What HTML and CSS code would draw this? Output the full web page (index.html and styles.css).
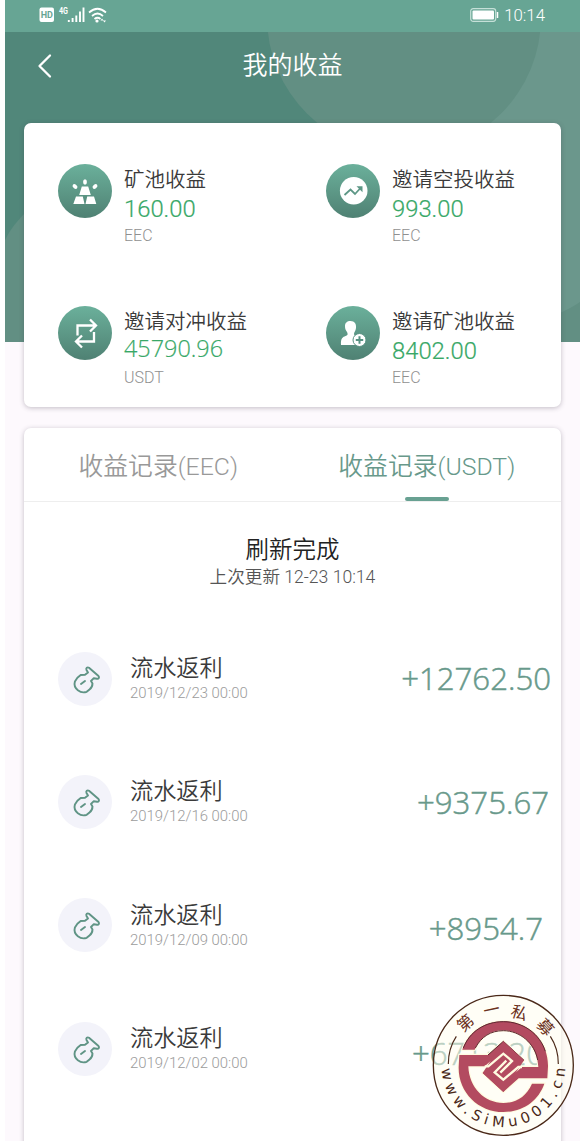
FILE: index.html
```html
<!DOCTYPE html>
<html lang="zh-CN">
<head>
  <meta charset="UTF-8">
  <meta name="viewport" content="width=device-width, initial-scale=1.0">
  <title>我的收益</title>
  <link rel="stylesheet" href="styles.css">
</head>
<body>
  <div class="app">
    <!-- Header background -->
    <svg class="header-bg" viewBox="5 0 575 342" preserveAspectRatio="none">
      <rect x="5" width="575" height="342" fill="#51877a"/>
      <path d="M440 0H580V342H440Z" fill="#6b978c"/>
      <circle cx="404" cy="17" r="137" fill="#628f83"/>
      <path d="M5 240Q12 225 30 208V342H5Z" fill="#628f83"/>
      <path d="M555 315Q570 309 580 302V342H555Z" fill="#628f83"/>
    </svg>

    <!-- Status bar -->
    <div class="status-bar">
      <svg class="status-icons" width="70" height="20" viewBox="0 0 70 20">
        <rect x="1.500" y="2.500" width="14.500" height="14.500" rx="2" fill="#fff"/>
        <text x="8.800" y="13" class="hd">HD</text>
        <text x="21" y="9" class="net" textLength="9" lengthAdjust="spacingAndGlyphs">4G</text>
        <path d="M30.800 17v-2M34.600 17v-4M38.300 17v-6.500M42 17V6.500M45.500 17V2.500" stroke="#fff" stroke-width="1.900"/>
        <g fill="none" stroke="#fff" stroke-width="1.700">
          <path d="M51 7.500Q59.500 0 68 7.500M54 11Q59.500 6 65 11M56.500 14Q59.500 11.500 62.500 14"/>
        </g>
        <circle cx="59" cy="16" r="1.600" fill="#fff"/>
        <path d="M62.500 15.500l1.500-2 1.500 2zM65 15.500l1.500 2 1.500-2z" fill="#fff"/>
      </svg>
      <div class="status-right">
        <svg width="29" height="14" viewBox="0 0 29 14">
          <rect x=".7" y=".7" width="25" height="12.600" rx="2.500" fill="none" stroke="#c5e0d8" stroke-width="1.200"/>
          <rect x="2.500" y="2.500" width="21.500" height="9" rx="1" fill="#fff"/>
          <path d="M27.500 4v6" stroke="#fff" stroke-width="1.500"/>
        </svg>
        <span>10:14</span>
      </div>
    </div>

    <!-- Title bar -->
    <div class="nav">
      <svg class="back" width="16" height="26" viewBox="0 0 16 26">
        <path d="M13 2.500L2.500 13L13 23.500" fill="none" stroke="#fff" stroke-width="2.300" stroke-linecap="round" stroke-linejoin="round"/>
      </svg>
      <h1>我的收益</h1>
    </div>

    <!-- Income summary -->
    <div class="card summary">
      <div class="income">
        <div class="income-icon">
          <svg viewBox="0 0 54 54" fill="#fff">
            <path d="M23.800 22.500h6.400l2.600 8.500H21.200zM18 32.500h6.800l1.700 7.500H15.300zM29.200 32.500H36l2.300 7.500H27.500z"/>
            <ellipse cx="27" cy="18" rx="1.900" ry="2.700"/>
            <ellipse cx="17" cy="22.500" rx="1.900" ry="2.800" transform="rotate(-48 17 22.500)"/>
            <ellipse cx="37" cy="22.500" rx="1.900" ry="2.800" transform="rotate(48 37 22.500)"/>
          </svg>
        </div>
        <div>
          <p class="label">矿池收益</p>
          <p class="value">160.00</p>
          <p class="unit">EEC</p>
        </div>
      </div>
      <div class="income">
        <div class="income-icon">
          <svg viewBox="0 0 54 54">
            <circle cx="27.700" cy="26.700" r="13.800" fill="#fff"/>
            <path d="M18.500 31l6-5.500 4.500 4.500 6-6.500" fill="none" stroke="#5d9786" stroke-width="1.800"/>
            <path d="M30.500 22.200h6v6z" fill="#5d9786"/>
          </svg>
        </div>
        <div>
          <p class="label">邀请空投收益</p>
          <p class="value">993.00</p>
          <p class="unit">EEC</p>
        </div>
      </div>
      <div class="income">
        <div class="income-icon">
          <svg viewBox="0 0 54 54" fill="none" stroke="#fff" stroke-width="2.300">
            <path d="M19.500 29.500V19.500H37M32 13.500l6 6-6 6M36 26V35.500H18.500M24 29.500l-6 6 6 6"/>
          </svg>
        </div>
        <div>
          <p class="label">邀请对冲收益</p>
          <p class="value value-wide">45790.96</p>
          <p class="unit">USDT</p>
        </div>
      </div>
      <div class="income">
        <div class="income-icon">
          <svg viewBox="0 0 54 54">
            <path d="M24.500 15c4.200 0 6 3 5.500 7-.3 3-2 4-2 6 0 2.500 4.500 3 6 5v6H15c-.5-7 2-8 4.500-9 2.500-1 2.500-1.500 1.500-4-1.500-2-2-3.500-2-6 0-3 2-5 5.500-5z" fill="#fff"/>
            <circle cx="33.500" cy="34" r="6.500" fill="#fff" stroke="#579282" stroke-width="1"/>
            <path d="M33.500 30.300v7.400M29.800 34h7.400" stroke="#579282" stroke-width="2"/>
          </svg>
        </div>
        <div>
          <p class="label">邀请矿池收益</p>
          <p class="value">8402.00</p>
          <p class="unit">EEC</p>
        </div>
      </div>
    </div>

    <!-- Income records -->
    <div class="card records">
      <div class="tabs">
        <div class="tab">收益记录(EEC)</div>
        <div class="tab active">收益记录(USDT)</div>
      </div>
      <div class="refresh">
        <p class="refresh-title">刷新完成</p>
        <p class="refresh-time">上次更新 12-23 10:14</p>
      </div>
      <div class="list" id="record-list"></div>
    </div>

    <!-- Round seal over the last record -->
    <svg class="seal" viewBox="36 42 428 428">
      <defs>
        <path id="seal-bottom" d="M64 255A186 186 0 0 0 436 255"/>
      </defs>
      <circle cx="250" cy="256" r="210" fill="#fffdee" fill-opacity=".55" stroke="#4a2818" stroke-width="4"/>
      <path d="M85 252Q85 205 109 169M415 252Q415 205 391 169" fill="none" stroke="#4a2818" stroke-width="3.500"/>
      <g fill="#b34b60" stroke="#fffbe0" stroke-width="7" paint-order="stroke">
        <path d="M127 209C145 157 192 124 250 124C326 124 386 184 384 260L382 295H296L250 336L188 279L202 266L213 277L250 310L306 261H355C353 197 306 151 250 151C211 151 181 171 164 209Z"/>
        <path d="M373 311C355 363 308 396 250 396C174 396 114 336 116 260L118 225H204L250 184L312 241L298 254L287 243L250 210L194 259H145C147 323 194 369 250 369C289 369 319 349 336 311Z"/>
      </g>
      <path d="M130 204C149 155 194 125 250 125C310 125 360 162 376 214M166 204C184 170 212 152 250 152C300 152 344 190 353 240M204 225L250 184L312 241" fill="none" stroke="#5d2930" stroke-width="3"/>
      <path d="M250 184L312 241L250 336L188 279Z" fill="#b34b60"/>
      <path d="M194 259L205 259L250 221L276 243L241 278M306 261L295 261L250 299L224 277L259 242" fill="none" stroke="#fffbe0" stroke-width="7"/>
      <g class="seal-cn">
        <text x="250" y="103" transform="rotate(-42 250 255)">第</text>
        <text x="250" y="103" transform="rotate(-12 250 255)">一</text>
        <text x="250" y="109" transform="rotate(17 250 255)">私</text>
        <text x="250" y="103" transform="rotate(48 250 255)">募</text>
      </g>
      <text class="seal-url"><textPath href="#seal-bottom" startOffset="12" textLength="562">www.SiMu001.cn</textPath></text>
    </svg>
  </div>

  <script>
    const records = [
      { date: '2019/12/23 00:00', amount: '+12762.50' },
      { date: '2019/12/16 00:00', amount: '+9375.67' },
      { date: '2019/12/09 00:00', amount: '+8954.7' },
      { date: '2019/12/02 00:00', amount: '+6713.20' },
    ];

    const list = document.getElementById('record-list');
    records.forEach(item => {
      list.innerHTML += `
        <div class="record">
          <div class="record-icon">
            <svg viewBox="0 0 54 54" fill="none" stroke="#5f9485" stroke-width="1.900" stroke-linejoin="round" stroke-linecap="round">
              <path d="M30 20.500l-1.500-2.500c-.8-1.800.8-3.300 2.500-2.300L40.500 24c1.200 1.500.2 3-1.500 2.700l-3.200-.5-2.800 2.800 1.500 2.500c0 3-1 4.500-3 6l-2.800 2.300c-3 1-6.500.3-8.800-1.500-3-2.500-4-5.500-3-8.800l2.500-3.800 3.300-2.700 4.300-.2z"/>
              <path d="M23 32l4-3"/>
            </svg>
          </div>
          <div>
            <p class="record-title">流水返利</p>
            <p class="record-date">${item.date}</p>
          </div>
          <span class="amount">${item.amount}</span>
        </div>
      `;
    });
  </script>
</body>
</html>
```

FILE: styles.css
```css
* {
  box-sizing: border-box;
}

body {
  margin: 0;
  height: 1141px;
  overflow: hidden;
  background: #fff;
  font-family: Roboto, "Noto Sans CJK SC", sans-serif;
  font-weight: 350;
  color: #3a3a3a;
}

p,
h1 {
  margin: 0;
}

.app {
  position: relative;
  height: 1141px;
  margin-left: 5px;
  overflow: hidden;
  background: #fdf9fd;
}

.header-bg {
  position: absolute;
  top: 0;
  left: 0;
  width: 575px;
  height: 342px;
}

.status-bar {
  position: relative;
  display: flex;
  justify-content: space-between;
  align-items: center;
  height: 32px;
  padding: 0 35px 2px 33px;
  background: #67a594;
  color: #fff;
}

.hd {
  font: bold 9px Roboto, sans-serif;
  text-anchor: middle;
  fill: #67a594;
}

.net {
  font: bold 9.5px Roboto, sans-serif;
  fill: #fff;
}

.status-right {
  display: flex;
  align-items: center;
  gap: 5px;
  font-size: 16.8px;
}

.nav {
  position: relative;
  display: flex;
  align-items: center;
  height: 91px;
  padding: 0 32px 24px;
  color: #fff;
}

.nav h1 {
  flex: 1;
  margin-right: 16px;
  font-size: 25px;
  font-weight: 350;
  line-height: 36px;
  text-align: center;
}

.card {
  position: relative;
  width: 537px;
  margin-left: 19px;
  background: #fff;
  border-radius: 7px;
  box-shadow: 0 1px 5px rgba(60, 50, 70, 0.3);
}

.summary {
  display: grid;
  grid-template-columns: 268px 1fr;
  grid-template-rows: 142px 142px;
  height: 284px;
}

.income {
  display: flex;
  gap: 12px;
  padding: 41px 0 0 34px;
}

.income-icon {
  width: 54px;
  height: 54px;
  border-radius: 50%;
  background: linear-gradient(#6bb09b, #4f8173);
}

.income-icon svg,
.record-icon svg {
  display: block;
}

.label {
  padding-top: 2px;
  font-size: 20.5px;
  line-height: 28px;
}

.value {
  font-size: 23.8px;
  line-height: 30px;
  color: #38a867;
  -webkit-text-stroke: 0.2px #38a867;
}

.value-wide {
  margin-top: -3px;
  margin-bottom: 3px;
  font-family: "Open Sans", sans-serif;
  font-size: 23.4px;
}

.unit {
  font-size: 16px;
  line-height: 23px;
  color: #909090;
}

.records {
  height: 740px;
  margin-top: 21px;
}

.tabs {
  display: flex;
  height: 74px;
  border-bottom: 1px solid #eee;
}

.tab {
  position: relative;
  flex: 1;
  padding-top: 2px;
  font-size: 24.8px;
  line-height: 74px;
  text-align: center;
  color: #999;
}

.tab.active {
  color: #68998b;
}

.tab.active::after {
  content: "";
  position: absolute;
  bottom: 0;
  left: 112px;
  width: 44px;
  height: 4px;
  border-radius: 2px;
  background: #68a192;
}

.refresh {
  height: 115px;
  padding-top: 32px;
  text-align: center;
}

.refresh-title {
  font-size: 23.5px;
  line-height: 32px;
  color: #222;
}

.refresh-time {
  font-size: 17.6px;
  line-height: 22px;
  color: #555;
}

.record {
  display: flex;
  align-items: center;
  height: 123.3px;
  padding-left: 34px;
}

.record-icon {
  width: 54px;
  height: 54px;
  margin-right: 18px;
  border-radius: 50%;
  background: #f3f3fa;
}

.record-title {
  font-size: 23.2px;
  line-height: 30px;
}

.record-date {
  font-size: 14.9px;
  line-height: 21px;
  color: #9c9c9c;
}

.amount {
  margin: -1px 10px 0 auto;
  font-family: "Open Sans", sans-serif;
  font-size: 31.2px;
  line-height: 42px;
  color: #68998b;
  -webkit-text-stroke: 0.5px #68998b;
}

.record:nth-child(2) .amount {
  margin: 1px 12px 0 auto;
}

.record:nth-child(3) .amount {
  margin: 5px 18px 0 auto;
}

.record:nth-child(4) .amount {
  margin: 8px 17px 0 auto;
}

.seal {
  position: absolute;
  left: 427px;
  top: 994px;
  width: 142.67px;
  height: 142.67px;
}

.seal-cn {
  font: 49px "Noto Sans CJK SC", sans-serif;
  text-anchor: middle;
  fill: #6b3020;
}

.seal-url {
  font: 44px "DejaVu Sans", sans-serif;
  fill: #4a2818;
}
```
